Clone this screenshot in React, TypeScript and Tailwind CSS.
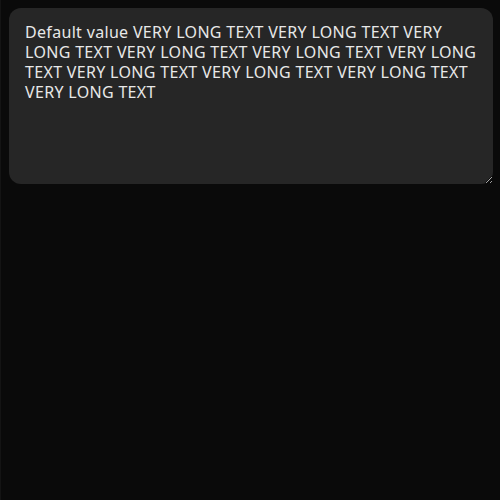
import React from "react";

export default function App() {
  const value =
    "Default value VERY LONG TEXT VERY LONG TEXT VERY LONG TEXT VERY LONG TEXT VERY LONG TEXT VERY LONG TEXT VERY LONG TEXT VERY LONG TEXT VERY LONG TEXT VERY LONG TEXT";
  return (
    <div className="min-h-[500px] w-[500px] bg-[#0a0a0a] border-l border-[#141414] pl-2 pr-[7px] pt-2">
      <textarea
        autoFocus
        defaultValue={value}
        onFocus={(e) => {
          const t = e.currentTarget;
          t.setSelectionRange(t.value.length, t.value.length);
        }}
        className="block w-full h-[176px] rounded-xl bg-[#262626] text-[#e8e8e8] caret-[#3b82f6] pl-4 pr-3 pt-[14px] text-[16px] leading-[20px] tracking-[0.32px] outline-none"
        style={{ fontFamily: '"Noto Sans", sans-serif' }}
      />
    </div>
  );
}
